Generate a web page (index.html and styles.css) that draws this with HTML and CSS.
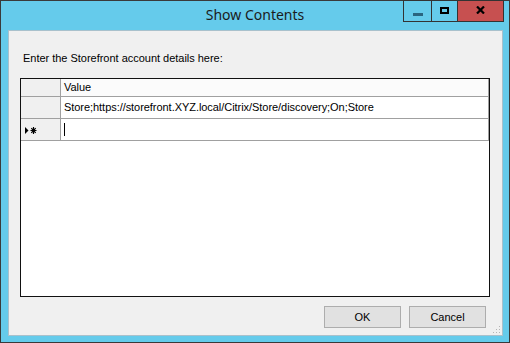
FILE: index.html
```html
<!DOCTYPE html>
<html>
<head>
    <meta charset="UTF-8">
    <title>Show Contents</title>
    <link rel="stylesheet" href="styles.css">
</head>
<body>
    <div class="window">
        <div class="titlebar">
            <div></div>
            <div class="title">Show Contents</div>
            <div class="controls">
                <div class="ctl ctl-min"><span class="min-bar"></span></div>
                <div class="ctl ctl-max"><span class="max-box"></span></div>
                <div class="ctl ctl-close">
                    <svg width="9" height="8" viewBox="0 0 9 8">
                        <path d="M1 0.5 L8 7.5 M8 0.5 L1 7.5" stroke="#000" stroke-width="2.2" fill="none"/>
                    </svg>
                </div>
            </div>
        </div>
        <div class="client">
            <div class="label">Enter the Storefront account details here:</div>
            <div class="grid">
                <div class="row row-head">
                    <div class="rh"></div>
                    <div class="cell">Value</div>
                </div>
                <div class="row">
                    <div class="rh"></div>
                    <div class="cell">Store;https://storefront.XYZ.local/Citrix/Store/discovery;On;Store</div>
                </div>
                <div class="row">
                    <div class="rh">
                        <svg width="14" height="9" viewBox="0 0 14 9">
                            <path d="M1 1 L4.5 4.5 L1 8 Z" fill="#000"/>
                            <path d="M9.5 1 V8 M6.5 4.5 H12.5 M7.3 2.2 L11.7 6.8 M11.7 2.2 L7.3 6.8" stroke="#000" stroke-width="1.2" fill="none"/>
                        </svg>
                    </div>
                    <div class="cell"><span class="caret"></span></div>
                </div>
            </div>
            <div class="footer">
                <button class="btn">OK</button>
                <button class="btn">Cancel</button>
            </div>
            <div class="grip">
                <svg width="8" height="8" viewBox="0 0 8 8">
                    <rect x="6" y="0" width="1" height="1" fill="#b5b5b5"/>
                    <rect x="3" y="3" width="1" height="1" fill="#b5b5b5"/>
                    <rect x="6" y="3" width="1" height="1" fill="#b5b5b5"/>
                    <rect x="0" y="6" width="1" height="1" fill="#b5b5b5"/>
                    <rect x="3" y="6" width="1" height="1" fill="#b5b5b5"/>
                    <rect x="6" y="6" width="1" height="1" fill="#b5b5b5"/>
                </svg>
            </div>
        </div>
    </div>
</body>
</html>
```

FILE: styles.css
```css
body {
    margin: 0;
    padding: 0;
    background: #fff;
    font-family: 'Liberation Sans', Arial, sans-serif;
}

.window {
    width: 510px;
    height: 343px;
    box-sizing: border-box;
    border: 1px solid #3a3a3a;
    background-color: #65cbeb;
    display: flex;
    flex-direction: column;
}

.titlebar {
    height: 29px;
    display: grid;
    grid-template-columns: 1fr auto 1fr;
    align-items: start;
}

.title {
    font-family: 'Noto Sans', 'Open Sans', sans-serif;
    font-size: 14px;
    color: #1b1b1b;
    padding-top: 4px;
    line-height: 20px;
}

.controls {
    justify-self: end;
    display: flex;
    margin-right: 5px;
    margin-top: -1px;
}

.ctl {
    height: 20px;
    border: 1px solid #333;
    border-left: none;
    display: flex;
    align-items: center;
    justify-content: center;
}

.ctl-min {
    width: 27px;
    border-left: 1px solid #333;
}

.ctl-max {
    width: 25px;
}

.ctl-close {
    width: 45px;
    background-color: #c75050;
}

.min-bar {
    display: block;
    width: 10px;
    height: 3px;
    background-color: #2a6580;
    margin-top: 6px;
}

.max-box {
    display: block;
    width: 5px;
    height: 3px;
    border: 2px solid #000;
    margin-top: -2px;
}

.ctl-close svg {
    margin-top: -2px;
}

.client {
    flex: 1;
    margin: 0 6px 6px 7px;
    background-color: #f0f0f0;
    border: 1px solid #a9c1cc;
    position: relative;
    display: flex;
    flex-direction: column;
    padding: 0 12px 0 11px;
}

.label {
    font-size: 11px;
    line-height: 13px;
    color: #000;
    margin: 21px 0 0 3px;
    letter-spacing: -0.02px;
}

.grid {
    margin-top: 13px;
    height: 217px;
    border: 1px solid #111;
    background-color: #fff;
}

.row {
    display: flex;
    height: 21px;
    border-bottom: 1px solid #a0a0a0;
}

.row-head {
    height: 17px;
}

.rh {
    width: 40px;
    background-color: #f0f0f0;
    border-right: 1px solid #a0a0a0;
    display: flex;
    align-items: center;
    padding-left: 3px;
    box-sizing: border-box;
}

.rh svg {
    margin-top: 1px;
}

.cell {
    flex: 1;
    border-right: 1px solid #a0a0a0;
    font-size: 11px;
    line-height: 21px;
    padding-left: 3px;
    color: #000;
    display: flex;
    align-items: center;
    letter-spacing: -0.05px;
}

.row-head .cell {
    background-color: #fbfbfb;
    line-height: 17px;
}

.caret {
    display: block;
    width: 1px;
    height: 13px;
    background-color: #000;
}

.footer {
    display: flex;
    justify-content: flex-end;
    gap: 8px;
    margin-top: 9px;
    padding-right: 4px;
}

.btn {
    width: 77px;
    height: 22px;
    margin: 0;
    padding: 0;
    background-color: #e1e1e1;
    border: 1px solid #adadad;
    font-family: 'Liberation Sans', Arial, sans-serif;
    font-size: 11px;
    color: #000;
}

.grip {
    position: absolute;
    right: 1px;
    bottom: 1px;
    line-height: 0;
}
```
